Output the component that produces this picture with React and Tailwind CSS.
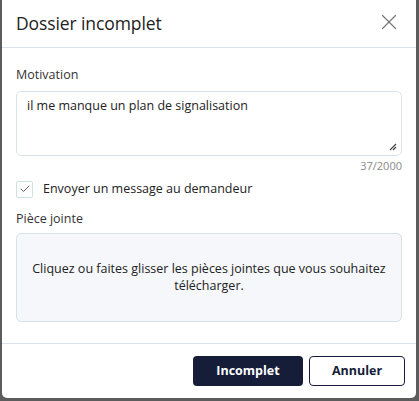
import { X, Check } from "lucide-react";

const App = () => {
  return (
    <div
      className="w-[419px] h-[401px] bg-[#5c5c5c] overflow-hidden px-[2px]"
      style={{ fontFamily: '"Open Sans", "Liberation Sans", sans-serif' }}
    >
      <div className="w-[414px] h-[398px] bg-white rounded-b-[5px] flex flex-col text-[#222]">
        {/* header */}
        <div className="h-[48px] flex items-center justify-between pl-[14px] pr-[14px] border-b border-[#dde2e8]">
          <h2 className="text-[17.5px] tracking-[-0.1px] text-[#222] font-medium">Dossier incomplet</h2>
          <X className="w-[26px] h-[26px] text-[#777] -mt-[4px]" strokeWidth={1.1} />
        </div>

        {/* body */}
        <div className="flex-1 px-[14px] pt-[17px]">
          <label className="block text-[12.5px] text-[#333] leading-[20px]">Motivation</label>
          <div className="mt-[6px] relative h-[65px] rounded-[5px] border border-[#dbe2ea] px-[10px] py-[5px] text-[12.5px] text-[#222]">
            il me manque un plan de signalisation
            <svg className="absolute right-[4px] bottom-[4px]" width="8" height="8" viewBox="0 0 8 8">
              <path d="M7 1L1 7M7 4L4 7" stroke="#444" strokeWidth="1.2" />
            </svg>
          </div>
          <div className="text-right text-[11px] text-[#8a8a8a] leading-[16px] mt-[2px]">37/2000</div>

          <div className="flex items-center gap-[10px] mt-[6px]">
            <div className="w-[17px] h-[17px] border border-[#cfe0df] rounded-[2px] flex items-center justify-center">
              <Check className="w-[12px] h-[12px] text-[#333]" strokeWidth={1.5} />
            </div>
            <span className="text-[12.5px] text-[#222]">Envoyer un message au demandeur</span>
          </div>

          <div className="text-[12.5px] text-[#333] mt-[10px] leading-[20px]">Pièce jointe</div>
          <div className="mt-[4px] h-[89px] rounded-[5px] border border-[#d6e2e5] bg-[#f5f7fa] flex items-center justify-center px-[12px] text-center text-[12.5px] leading-[17px] text-[#222]">
            Cliquez ou faites glisser les pièces jointes que vous souhaitez télécharger.
          </div>
        </div>

        {/* footer */}
        <div className="h-[55px] border-t border-[#dde2e8] flex items-center justify-end gap-[6px] px-[11px]">
          <button className="w-[110px] h-[30px] rounded-[4px] bg-[#151d38] text-white text-[12.5px] font-bold">
            Incomplet
          </button>
          <button className="w-[96px] h-[30px] rounded-[4px] border border-[#151d38] bg-white text-[#151d38] text-[12.5px] font-bold">
            Annuler
          </button>
        </div>
      </div>
    </div>
  );
};

export default App;
